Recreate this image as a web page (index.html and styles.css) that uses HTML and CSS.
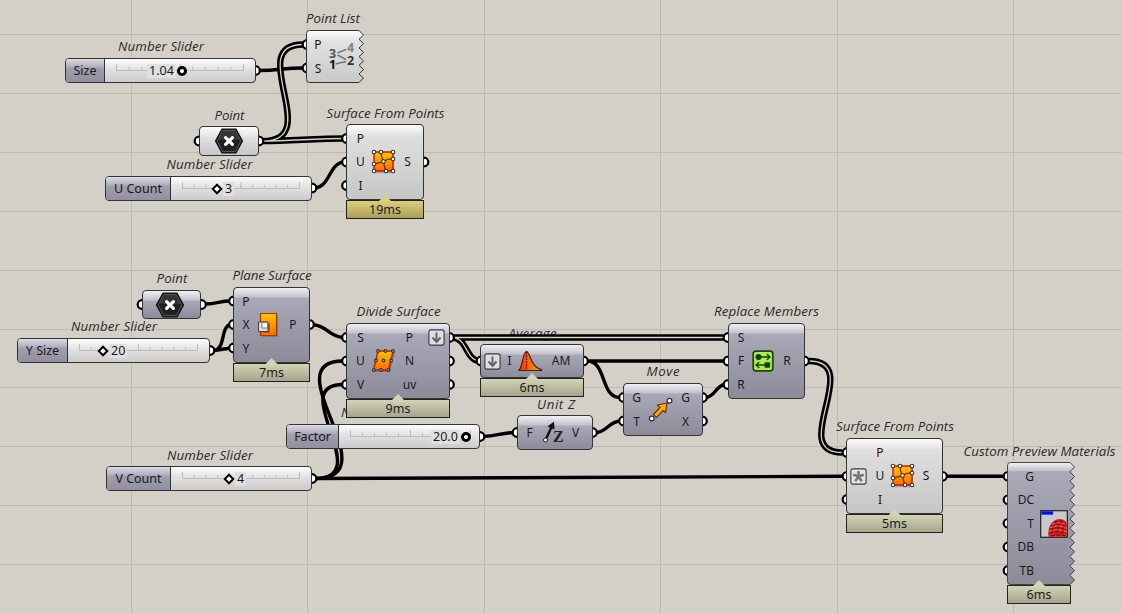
FILE: index.html
```html
<!DOCTYPE html>
<html lang="en">
<head>
<meta charset="utf-8">
<title>Definition canvas</title>
<link rel="stylesheet" href="styles.css">
</head>
<body>
<main class="canvas">
<svg class="layer" width="1122" height="613" viewBox="0 0 1122 613">
  <defs>
    <linearGradient id="gLight" x1="0" y1="0" x2="0" y2="1"><stop offset="0" stop-color="#fff"/><stop offset=".2" stop-color="#e2e2e2"/><stop offset="1" stop-color="#c9c9c9"/></linearGradient>
    <linearGradient id="gDark" x1="0" y1="0" x2="0" y2="1"><stop offset="0" stop-color="#f4f4f8"/><stop offset=".07" stop-color="#bebdca"/><stop offset=".075" stop-color="#aaa9b7"/><stop offset="1" stop-color="#8d8b9a"/></linearGradient>
    <linearGradient id="gOrange" x1="0" y1="0" x2="0" y2="1"><stop offset="0" stop-color="#ffc400"/><stop offset="1" stop-color="#ff6a00"/></linearGradient>
    <linearGradient id="gBell" x1="0" y1="0" x2="1" y2="0"><stop offset="0" stop-color="#ff2c00"/><stop offset="1" stop-color="#ffb000"/></linearGradient>
    <symbol id="patch" viewBox="0 0 26 26">
      <path d="M4 4H22V23H4Z" fill="#555" opacity=".35" transform="translate(1.2 1.2)"/>
      <path d="M3 3H22V22H3Z" fill="url(#gOrange)" stroke="#c81800" stroke-width="1.4"/>
      <path d="M10 3Q10 8 12.500 12.500Q13 17 15 22M3 15Q8 14 12.500 12.500Q17 9.500 22 10" fill="none" stroke="#6b2400" stroke-width="1.200"/>
      <g fill="#fff" stroke="#333" stroke-width="1.100"><circle cx="3" cy="3" r="1.800"/><circle cx="10" cy="3" r="1.800"/><circle cx="22" cy="3" r="1.800"/><circle cx="22" cy="10" r="1.800"/><circle cx="12.500" cy="12.500" r="1.800"/><circle cx="3" cy="15" r="1.800"/><circle cx="3" cy="22" r="1.800"/><circle cx="15" cy="22" r="1.800"/><circle cx="22" cy="22" r="1.800"/></g>
    </symbol>
    <symbol id="hex" viewBox="0 0 30 26">
      <path d="M8 1H22L28.500 13L22 25H8L1.500 13Z" fill="#202020" stroke="#111" stroke-width="1.200"/>
      <path d="M8.700 2.500H21.300L26.700 13L21.300 23.500H8.700L3.300 13Z" fill="none" stroke="#5b5b5b" stroke-width=".9"/>
      <path d="M8.700 3H21.300L26 12H4Z" fill="#444" opacity=".6"/>
      <path d="M11.600 9.600L18.400 16.400M18.400 9.600L11.600 16.400" stroke="#fff" stroke-width="3.200" stroke-linecap="round"/>
    </symbol>
    <symbol id="down" viewBox="0 0 17 17">
      <rect x=".9" y=".9" width="15.200" height="15.200" rx="2" fill="#dedee2" stroke="#3b3b3b" stroke-width="1.100"/>
      <path d="M8.500 3.500V12.500M4.500 8.500L8.500 13L12.500 8.500" fill="none" stroke="#666" stroke-width="2"/>
    </symbol>
    <symbol id="graft" viewBox="0 0 17 17">
      <rect x=".9" y=".9" width="15.200" height="15.200" rx="2" fill="#e6e6e6" stroke="#3b3b3b" stroke-width="1.100"/>
      <path d="M8.500 3V8.500M3.200 6.800L8.500 8.500L13.800 6.800M5.200 13.300L8.500 8.500L11.800 13.300" fill="none" stroke="#777" stroke-width="2.600"/>
    </symbol>
  </defs>
  <path class="grid" d="M131.500 0V613M307.500 0V613M484.500 0V613M660.500 0V613M837.500 0V613M1013.500 0V613M0 34.500H1122M0 93.500H1122M0 152.500H1122M0 211.500H1122M0 270.500H1122M0 329.500H1122M0 387.500H1122M0 446.500H1122M0 505.500H1122M0 564.500H1122"/>
  <g class="title">
    <text x="306" y="22.500" textLength="54">Point List</text>
    <text x="118" y="51" textLength="86">Number Slider</text>
    <text x="214.500" y="119.500" textLength="30">Point</text>
    <text x="326.500" y="117.500" textLength="118">Surface From Points</text>
    <text x="166.500" y="168.500" textLength="86">Number Slider</text>
    <text x="156.500" y="283" textLength="31">Point</text>
    <text x="232.500" y="279.500" textLength="79">Plane Surface</text>
    <text x="71" y="331" textLength="86">Number Slider</text>
    <text x="356.500" y="316" textLength="84">Divide Surface</text>
    <text x="508.500" y="337.500" textLength="48">Average</text>
    <text x="714" y="316" textLength="105">Replace Members</text>
    <text x="646.500" y="376" textLength="33">Move</text>
    <text x="537" y="409" textLength="38">Unit Z</text>
    <text x="341" y="417" textLength="86">Number Slider</text>
    <text x="167" y="459.500" textLength="86">Number Slider</text>
    <text x="836" y="431" textLength="118">Surface From Points</text>
    <text x="963.500" y="455.500" textLength="152">Custom Preview Materials</text>
  </g>
  <g class="wire">
    <path d="M259 70.500C280 70.500 282 68 303 68"/>
    <path d="M315 188C330 187 329 163 344 162"/>
    <path d="M205 304C218 304 219 301 231 301"/>
    <path d="M214 350.500C226 349 220 326 231 324.500M214 350.500L231 348"/>
    <path d="M312 324.500C328 325.500 328 336.500 343 337.500"/>
    <path d="M315 478.500C392 478.500 272 361 343 361"/>
    <path d="M315 478.500C377 478.500 285 384.500 343 384.500"/>
    <path d="M315 478.500L843 476.300"/>
    <path d="M587 361H725M587 361C607 361 600 397.500 620 397.500"/>
    <path d="M482 436.500C498 436 500 433 514 432.500M596 432.500C607 432 609 421.500 620 421M706 397.500C715 397 716 385 725 384.500"/>
    <path d="M946 476.300H1005"/>
  </g>
  <g class="wire double">
    <path d="M263 141C325 141 244 44.500 303 44.500M263 141C290 141 316 138.500 344 138.500"/>
    <path d="M453 337.500H725M453 337.500C467 338.500 466 360 479 361M809 361C865 361 787 452.500 842 452.500"/>
  </g>
  <g class="wire gap">
    <path d="M263 141C325 141 244 44.500 303 44.500M263 141C290 141 316 138.500 344 138.500"/>
    <path d="M453 337.500H725M453 337.500C467 338.500 466 360 479 361M809 361C865 361 787 452.500 842 452.500"/>
  </g>
  <g class="grip">
    <circle cx="255.500" cy="70.500" r="4.300"/><circle cx="307" cy="44.500" r="4.300"/><circle cx="307" cy="68" r="4.300"/>
    <circle cx="199" cy="141" r="4.300"/><circle cx="259" cy="141" r="4.300"/>
    <circle cx="346.500" cy="138.500" r="4.300"/><circle cx="346.500" cy="162" r="4.300"/><circle cx="346.500" cy="185.500" r="4.300"/><circle cx="424" cy="162" r="4.300"/>
    <circle cx="312" cy="188" r="4.300"/><circle cx="142" cy="304.500" r="4.300"/><circle cx="201.500" cy="304.500" r="4.300"/><circle cx="210" cy="350.500" r="4.300"/>
    <circle cx="233.500" cy="301" r="4.300"/><circle cx="233.500" cy="324.500" r="4.300"/><circle cx="233.500" cy="348" r="4.300"/><circle cx="309.500" cy="324.500" r="4.300"/>
    <circle cx="346.500" cy="337.500" r="4.300"/><circle cx="346.500" cy="361" r="4.300"/><circle cx="346.500" cy="384.500" r="4.300"/>
    <circle cx="449.500" cy="337.500" r="4.300"/><circle cx="449.500" cy="361" r="4.300"/><circle cx="449.500" cy="384.500" r="4.300"/>
    <circle cx="481" cy="361" r="4.300"/><circle cx="583.500" cy="361" r="4.300"/>
    <circle cx="480" cy="436.500" r="4.300"/><circle cx="517" cy="432.500" r="4.300"/><circle cx="592.500" cy="432.500" r="4.300"/>
    <circle cx="623.500" cy="397.500" r="4.300"/><circle cx="623.500" cy="421" r="4.300"/><circle cx="702.500" cy="397.500" r="4.300"/><circle cx="702.500" cy="421" r="4.300"/>
    <circle cx="728" cy="337.500" r="4.300"/><circle cx="728" cy="361" r="4.300"/><circle cx="728" cy="384.500" r="4.300"/><circle cx="804.500" cy="361" r="4.300"/>
    <circle cx="312" cy="478.500" r="4.300"/>
    <circle cx="847" cy="452.500" r="4.300"/><circle cx="847" cy="476.300" r="4.300"/><circle cx="847" cy="499.500" r="4.300"/><circle cx="942.500" cy="476.300" r="4.300"/>
    <circle cx="1008" cy="476.300" r="4.300"/><circle cx="1008" cy="499.800" r="4.300"/><circle cx="1008" cy="523.300" r="4.300"/><circle cx="1008" cy="547" r="4.300"/><circle cx="1008" cy="570.500" r="4.300"/>
  </g>
</svg>

<section class="slider s-size"><b>Size</b><div class="rail"><i class="track"></i><span class="value">1.04</span><i class="knob round"></i></div></section>
<section class="slider s-u"><b>U Count</b><div class="rail"><i class="track"></i><i class="knob"></i><span class="value">3</span></div></section>
<section class="slider s-y"><b>Y Size</b><div class="rail"><i class="track"></i><i class="knob"></i><span class="value">20</span></div></section>
<section class="slider s-v"><b>V Count</b><div class="rail"><i class="track"></i><i class="knob"></i><span class="value">4</span></div></section>
<section class="slider s-factor"><b>Factor</b><div class="rail"><i class="track"></i><span class="value">20.0</span><i class="knob round"></i></div></section>

<section class="node torn n-list">
  <svg class="tear" width="60" height="54" viewBox="0 0 60 54"><path d="M3.500 .5H53L57.500 5L53 9.300L57.500 13.600L53 18L57.500 22.300L53 26.600L57.500 31L53 35.300L57.500 39.600L53 44L57.500 48L53 52.500H3.500Q.5 52.500 .5 49.500V3.500Q.5 .5 3.500 .5Z" fill="url(#gLight)" stroke="#333"/></svg>
  <div class="ports"><span>P</span><span>S</span></div>
  <svg class="icon" width="28" height="32" viewBox="0 -2 28 32"><g class="digits"><text x="0" y="14.500" fill="#555">3</text><text x="18" y="9" fill="#808080">4</text><text x="0" y="25.500" fill="#111">1</text><text x="18" y="21.500" fill="#333">2</text></g><path d="M8.500 10L17 6.500M8.500 12L17 16.500M6.500 21L17 18.500" stroke="#777" stroke-width="1.500"/></svg>
  <div></div>
</section>

<section class="node light param n-pt1"><svg width="30" height="26"><use href="#hex"/></svg></section>
<section class="node dark param n-pt2"><svg width="30" height="26"><use href="#hex"/></svg></section>

<section class="node light n-sfp1">
  <div class="ports"><span>P</span><span>U</span><span>I</span></div>
  <svg class="icon" width="26" height="26"><use href="#patch"/></svg>
  <div class="ports"><span>S</span></div>
  <footer class="time slow">19ms</footer>
</section>

<section class="node dark n-plane">
  <div class="ports"><span>P</span><span>X</span><span>Y</span></div>
  <svg class="icon" width="22" height="26" viewBox="0 0 22 26"><path d="M5 3H21V25H5Z" fill="#444" opacity=".35"/><path d="M3.500 1.500H19.500V23.500H3.500Z" fill="url(#gOrange)" stroke="#a83a00" stroke-width="1.200"/><path d="M12 11V20H4" fill="none" stroke="#9b3000" stroke-width="1.100"/><path d="M1.500 10H11V19.500H1.500Z" fill="#ddd" stroke="#444"/><path d="M5 10.500V16H10.500V10.500Z" fill="#fff" stroke="#777"/></svg>
  <div class="ports"><span>P</span></div>
  <footer class="time">7ms</footer>
</section>

<section class="node dark n-divide">
  <div class="ports"><span>S</span><span>U</span><span>V</span></div>
  <svg class="icon" width="26" height="26" viewBox="0 0 26 26"><path d="M8 4L24 4L19 24H4Z" fill="#444" opacity=".4"/><path d="M7 3H22L17.500 22H2.500Z" fill="url(#gOrange)" stroke="#c82000" stroke-width="1.500"/><g fill="#aaa" stroke="#333" stroke-width="1.100"><circle cx="7" cy="3" r="1.400"/><circle cx="14.500" cy="3" r="1.400"/><circle cx="22" cy="3" r="1.400"/><circle cx="5" cy="12.500" r="1.400"/><circle cx="12.500" cy="12.500" r="1.400"/><circle cx="20" cy="12.500" r="1.400"/><circle cx="2.800" cy="22" r="1.400"/><circle cx="10" cy="22" r="1.400"/><circle cx="17.500" cy="22" r="1.400"/></g></svg>
  <div class="ports"><span>P</span><span>N</span><span>uv</span></div>
  <svg class="tag" width="17" height="17"><use href="#down"/></svg>
  <footer class="time">9ms</footer>
</section>

<section class="node dark n-avg">
  <svg class="tag" width="17" height="17"><use href="#down"/></svg>
  <div class="ports"><span>I</span></div>
  <svg class="icon" width="26" height="24" viewBox="0 0 26 24"><path d="M2 21C6 18 5.500 2.500 9.500 2.500C13.500 2.500 13 18 24.500 20.500V21.500H2Z" fill="url(#gBell)" stroke="#402018" stroke-width="1.200"/><path d="M9.500 3V21" stroke="#600" stroke-width="1.200" stroke-dasharray="2 1"/></svg>
  <div class="ports"><span>AM</span></div>
  <footer class="time">6ms</footer>
</section>

<section class="node dark n-unit">
  <div class="ports"><span>F</span></div>
  <svg class="icon" width="24" height="24" viewBox="0 0 24 24"><path d="M4 18L9.500 6" stroke="#111" stroke-width="2.400"/><path d="M12 .5L12.500 8.500L5.500 5.500Z" fill="#111"/><circle cx="3.500" cy="19" r="2" fill="#fff" stroke="#222"/><text x="11" y="21" class="zed">Z</text></svg>
  <div class="ports"><span>V</span></div>
</section>

<section class="node dark n-move">
  <div class="ports"><span>G</span><span>T</span></div>
  <svg class="icon" width="26" height="26" viewBox="0 0 26 26"><path d="M5.500 17.500L12 10.500L9.500 8L19 6L17.500 15.500L15 13.500L8.500 20.500Z" fill="#ffae00" stroke="#663400" stroke-width="1.200"/><circle cx="3.800" cy="21.500" r="2.400" fill="#fff" stroke="#333" stroke-width="1.300"/><circle cx="21.500" cy="3.700" r="2.400" fill="#fff" stroke="#333" stroke-width="1.300"/></svg>
  <div class="ports"><span>G</span><span>X</span></div>
</section>

<section class="node dark n-replace">
  <div class="ports"><span>S</span><span>F</span><span>R</span></div>
  <svg class="icon" width="22" height="22" viewBox="0 0 22 22"><rect x="1.200" y="1.200" width="19.600" height="19.600" rx="2.500" fill="#a9ee4c" stroke="#24400d" stroke-width="1.700"/><circle cx="6.500" cy="7" r="3" fill="#173c0c"/><path d="M8 7H18M14.800 4L18 7L14.800 10M14 15H4M7.200 12L4 15L7.200 18" fill="none" stroke="#173c0c" stroke-width="1.300"/><rect x="12.500" y="12.200" width="5.600" height="5.600" rx="1" fill="#173c0c"/></svg>
  <div class="ports"><span>R</span></div>
</section>

<section class="node light n-sfp2">
  <svg class="tag" width="17" height="17"><use href="#graft"/></svg>
  <div class="ports"><span>P</span><span>U</span><span>I</span></div>
  <svg class="icon" width="26" height="26"><use href="#patch"/></svg>
  <div class="ports"><span>S</span></div>
  <footer class="time">5ms</footer>
</section>

<section class="node torn n-custom">
  <svg class="tear" width="70" height="124" viewBox="0 0 70 124"><path d="M3.500 .5H63L67.500 5L63 9.900L67.500 14.500L63 19.300L67.500 24L63 28.700L67.500 33.400L63 38.100L67.500 42.800L63 47.500L67.500 52.200L63 56.900L67.500 61.600L63 66.300L67.500 71L63 75.700L67.500 80.400L63 85.100L67.500 89.800L63 94.500L67.500 99.200L63 103.900L67.500 108.600L63 113.300L67.500 118L63 122.500H3.500Q.5 122.500 .5 119.500V3.500Q.5 .5 3.500 .5Z" fill="url(#gDark)" stroke="#444"/></svg>
  <div class="ports"><span>G</span><span>DC</span><span>T</span><span>DB</span><span>TB</span></div>
  <svg class="icon" width="28" height="28" viewBox="0 0 28 28"><rect x=".7" y=".7" width="26.600" height="26.600" fill="#c9c9cc" stroke="#222" stroke-width="1.200"/><path d="M1.300 1.300H13V4.700H1.300Z" fill="#0010ff"/><path d="M8.500 26.700C7 16 13 9 20 9C24 9 26.700 12 26.700 14V26.700Z" fill="#d81c1c"/><path d="M14 12.500Q20 9.500 26 13M11 16Q19 12 26.500 16.500M9.500 19.500Q18 16 26.500 20M9 23Q18 20 26.500 23.500M11 26Q18 24 26.500 26" fill="none" stroke="#6d1111" stroke-width="1.100" stroke-dasharray="4 1.500"/><path d="M12 14.500Q20 11 26 15M10 18Q19 14 26.500 18.500M9 21.500Q18 18 26.500 22" fill="none" stroke="#e9a0a0" stroke-width=".7" stroke-dasharray="3 2"/></svg>
  <footer class="time">6ms</footer>
</section>
</main>
</body>
</html>
```
FILE: styles.css
```css
body { margin: 0; }
.canvas {
  position: relative;
  width: 1122px;
  height: 613px;
  overflow: hidden;
  background: #d4d0c8;
  color: #1a1a1a;
  font: 12px/16px "Noto Sans", "Open Sans", sans-serif;
}
.layer { display: block; }
.grid { stroke: #bdbab1; fill: none; shape-rendering: crispEdges; }
.title { font: italic 400 13.3px "Open Sans", "Noto Sans", sans-serif; fill: #2a2a2a; }
.wire { fill: none; stroke: #000; stroke-width: 3.4; }
.double { stroke-width: 6.4; }
.gap { stroke: #d4d0c8; stroke-width: 1.3; }
.grip { fill: #fff; stroke: #000; stroke-width: 2.2; }

.node, .slider {
  position: absolute;
  box-sizing: border-box;
  display: flex;
  border: 1px solid #333;
  border-radius: 4px;
}
.node { align-items: center; }
.light { background: linear-gradient(#fcfcfc, #e4e4e4 10px, #dfdfdf 11px, #c6c6c6); }
.dark { background: linear-gradient(#f0f0f5, #c3c2ce 9px, #a9a8b6 10px, #8d8b9a); }
.torn { border-color: transparent; }
.tear { position: absolute; left: -1px; top: -1px; }
.param { justify-content: center; }
.ports { position: relative; flex: none; display: flex; flex-direction: column; text-align: center; }
.ports span { height: 23.6px; line-height: 23.6px; }
.icon, .tag { position: relative; flex: none; overflow: visible; }
.time {
  position: absolute;
  left: -1px;
  right: -1px;
  top: calc(100% + 1px);
  height: 17px;
  border: 1px solid #222;
  background: linear-gradient(#d3d3b5, #a4a58b);
  text-align: center;
  font-size: 12.5px;
  line-height: 17px;
}
.time::before {
  content: "";
  position: absolute;
  left: 50%;
  top: -6px;
  width: 12px;
  height: 6px;
  margin-left: -6px;
  background: #d3d3b5;
  clip-path: polygon(50% 0, 100% 100%, 0 100%);
}
.slow { background: linear-gradient(#dccf7c, #ab9e58); }
.slow::before { background: #dccf7c; }

.slider { height: 25px; background: linear-gradient(#fdfdfd, #e2e2e2 10px, #cbcbcb); }
.slider b {
  flex: none;
  box-sizing: border-box;
  border-right: 1px solid #333;
  border-radius: 3px 0 0 3px;
  background: linear-gradient(#dcdce5, #b0afbd 8px, #a09fad 9px, #9290a0);
  font-weight: 400;
  font-size: 12.5px;
  line-height: 23px;
  text-align: center;
}
.rail { position: relative; flex: 1; display: flex; align-items: center; padding: 0 11px; }
.track {
  position: absolute;
  left: 11px;
  right: 11px;
  top: 5px;
  height: 6px;
  border-bottom: 1px solid #bcbcbc;
  background:
    linear-gradient(90deg, #bcbcbc 1px, transparent 1px) 0 0 / calc((100% - 1px) / 2) 6px repeat-x,
    linear-gradient(90deg, #bcbcbc 1px, transparent 1px) 0 3px / calc((100% - 1px) / 10) 3px repeat-x;
}
.value { position: relative; flex: none; padding: 0 2px; background: #e0e0e0; font-size: 12.5px; line-height: 14px; }
.knob {
  position: relative;
  flex: none;
  box-sizing: border-box;
  width: 8px;
  height: 8px;
  margin-right: 2px;
  border: 2px solid #000;
  background: #fff;
  transform: rotate(45deg);
}
.knob.round { width: 10px; height: 10px; margin: 0 0 0 1px; border-width: 3px; border-radius: 50%; }

.s-size { left: 65px; top: 58px; width: 191px; }
.s-size b { width: 39px; }
.s-size .value { margin-left: 31px; }
.s-u { left: 105px; top: 176px; width: 207px; }
.s-u b { width: 65px; }
.s-u .knob { margin-left: 31px; }
.s-y { left: 17px; top: 338px; width: 193px; }
.s-y b { width: 50px; }
.s-y .knob { margin-left: 20px; }
.s-v { left: 106px; top: 466px; width: 206px; }
.s-v b { width: 64px; }
.s-v .knob { margin-left: 43px; }
.s-factor { left: 286px; top: 424px; width: 194px; }
.s-factor b { width: 52px; }
.s-factor .value { margin-left: 81px; }

.n-list { left: 306px; top: 30px; width: 58px; height: 53px; }
.n-list .ports { width: 22px; }
.digits { font: 700 12.5px "Noto Sans", sans-serif; }
.zed { font: 700 16px "Liberation Serif", serif; fill: #222; }
.n-pt1 { left: 199px; top: 126px; width: 60px; height: 30px; }
.n-pt2 { left: 142px; top: 290px; width: 59px; height: 29px; }
.n-pt2 svg { margin-right: 3px; }
.n-sfp1 { left: 346px; top: 124px; width: 78px; height: 76px; }
.n-sfp1 .ports { width: 27px; }
.n-sfp1 .icon { margin: 0 -3px 0 -3px; }
.n-plane { left: 233px; top: 287px; width: 77px; height: 76px; }
.n-plane .ports { width: 24px; }
.n-plane .icon { margin: 0 2px 0 -1px; }
.n-divide { left: 346px; top: 323px; width: 104px; height: 76px; }
.n-divide .ports { width: 27px; }
.n-divide .icon { margin: 0 -1px 0 -3px; }
.n-divide .tag { align-self: flex-start; margin: 5px 0 0 5px; }
.n-avg { left: 480px; top: 344px; width: 104px; height: 34px; }
.n-avg .tag { margin-left: 3px; }
.n-avg .ports { width: 17px; }
.n-avg .icon { margin-left: -1px; }
.n-avg .icon + .ports { width: 36px; }
.n-unit { left: 517px; top: 415px; width: 76px; height: 35px; }
.n-unit .ports { width: 23px; }
.n-unit .icon { margin: 0 -2px 0 1px; }
.n-move { left: 623px; top: 383px; width: 80px; height: 53px; }
.n-move .ports { width: 25px; }
.n-move .icon { margin: 0 -1px 0 -1px; }
.n-replace { left: 728px; top: 323px; width: 77px; height: 76px; }
.n-replace .ports { width: 24px; }
.n-replace .icon { margin: 0 1px 0 -1px; }
.n-sfp2 { left: 846px; top: 438px; width: 97px; height: 76px; }
.n-sfp2 .tag { margin-left: 3px; }
.n-sfp2 .ports { width: 26px; }
.n-sfp2 .icon { margin: 0 -3px; }
.n-custom { left: 1007px; top: 462px; width: 64px; height: 123px; }
.n-custom .ports { width: 26px; text-align: right; }
.n-custom .icon { margin-left: 6px; }
```
